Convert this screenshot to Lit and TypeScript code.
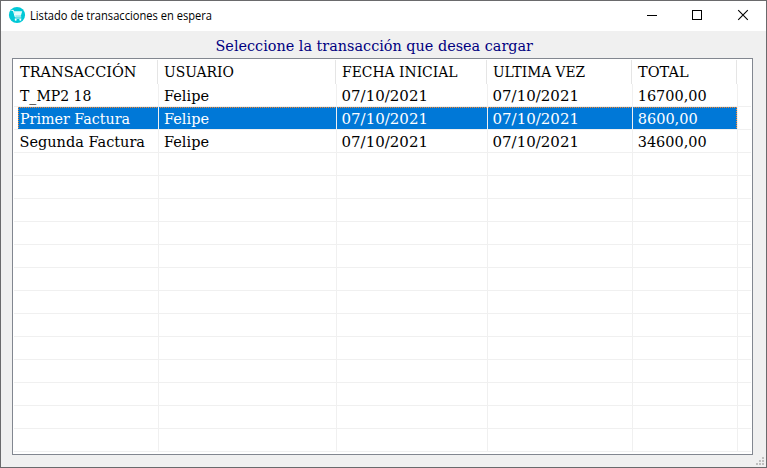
import { LitElement, html, css, svg } from "lit";
import { customElement, property } from "lit/decorators.js";

type Cell = [text: string, x: number, width: number];

const HEAD: Cell[] = [
  ["TRANSACCIÓN", 6, 116.5],
  ["USUARIO", 5, 70],
  ["FECHA INICIAL", 5, 115.5],
  ["ULTIMA VEZ", 5, 92],
  ["TOTAL", 5, 50.5],
];

const DATE: Cell = ["07/10/2021", 4.5, 86.5];
const USER: Cell = ["Felipe", 5, 45];

const ROWS: Cell[][] = [
  [["T_MP2 18", 6, 71.5], USER, DATE, DATE, ["16700,00", 4.7, 69]],
  [["Primer Factura", 6, 110], USER, DATE, DATE, ["8600,00", 4.7, 60]],
  [["Segunda Factura", 5.5, 125.5], USER, DATE, DATE, ["34600,00", 4.7, 69]],
];

const ROW_COUNT = 16;
const SELECTED = 1;

@customElement("fit-text")
class FitText extends LitElement {
  @property() text = "";
  @property({ type: Number }) x = 0;
  @property({ type: Number }) width = 0;
  @property({ type: Number }) baseline = 0;

  static styles = css`
    :host { display: block; height: 100%; }
    .line { display: block; width: 100%; height: 100%; overflow: visible; }
    .glyphs { fill: currentColor; white-space: pre; }
  `;

  render() {
    return html`<svg class="line">${svg`<text class="glyphs" x=${this.x} y=${this.baseline}
      textLength=${this.width} lengthAdjust="spacingAndGlyphs">${this.text}</text>`}</svg>`;
  }
}

@customElement("app-root")
class AppRoot extends LitElement {
  static styles = css`
    :host {
      display: block;
      height: 468px;
      font-family: "DejaVu Serif", serif;
      font-size: 15px;
      color: #000;
    }
    .window {
      box-sizing: border-box;
      height: 100%;
      border: 1px solid #6a6a6c;
      background: #f0f0f0;
      display: flex;
      flex-direction: column;
      position: relative;
    }
    .titlebar {
      height: 30px;
      background: #fff;
      display: flex;
      font-family: "Open Sans", "Noto Sans", sans-serif;
      font-size: 11.7px;
    }
    .logo { width: 18px; height: 18px; margin: 5px 0 0 7px; flex: none; }
    .caption { flex: 1; }
    .controls { display: flex; }
    .controls svg { width: 46px; height: 30px; }
    .heading { height: 27px; color: #000080; }
    .list {
      box-sizing: border-box;
      width: 741px;
      height: 397px;
      margin-left: 11px;
      padding: 1px;
      border: 1px solid #828790;
      background: #fff;
    }
    .row {
      box-sizing: border-box;
      display: grid;
      grid-template-columns: 145px 178px 151px 145px 105px 13px;
      height: 23px;
      border-bottom: 1px solid #f0f0f0;
    }
    .cell { box-sizing: border-box; border-right: 1px solid #f0f0f0; min-width: 0; }
    .head { height: 24px; border-bottom: 0; }
    .head .cell { border-right: 0; background: linear-gradient(#e5e5e5, #e5e5e5) right 1px top 0 / 1px 24px no-repeat; }
    .selected {
      color: #fff;
      background:
        repeating-linear-gradient(90deg, #ff8728 0 1px, #0078d7 1px 2px) 4px 0 / 719px 1px no-repeat,
        repeating-linear-gradient(#ff8728 0 1px, #0078d7 1px 2px) 4px 0 / 1px 22px no-repeat,
        repeating-linear-gradient(#ff8728 0 1px, #0078d7 1px 2px) 722px 0 / 1px 22px no-repeat,
        linear-gradient(#0078d7, #0078d7) 4px 0 / 719px 22px no-repeat;
    }
    .grip { position: absolute; right: 2px; bottom: 2px; width: 8px; height: 8px; fill: #bfbfbf; }
  `;

  private cells(items: Cell[], baseline: number) {
    return [0, 1, 2, 3, 4].map((i) => html`<div class="cell">${items[i]
      ? html`<fit-text .text=${items[i][0]} .x=${items[i][1]} .width=${items[i][2]} .baseline=${baseline}></fit-text>`
      : ""}</div>`);
  }

  render() {
    return html`
      <div class="window">
        <div class="titlebar">
          <svg class="logo" viewBox="0 0 18 18">
            <circle cx="9" cy="9" r="8.1" fill="#00c8d6"></circle>
            <path d="M3.4 4.4h2l1.8 6.5h6" fill="none" stroke="#fff" stroke-width="1"></path>
            <path d="M5.9 5.3h8.3l-1.3 4.5H7.1z" fill="#e4fbfc"></path>
            <path d="M6.8 12.4h6.6" stroke="#b5f0f4" stroke-width=".7"></path>
            <circle cx="7.7" cy="13.7" r="1" fill="#fff"></circle>
            <circle cx="12.3" cy="13.7" r="1" fill="#fff"></circle>
          </svg>
          <fit-text class="caption" .text=${"Listado de transacciones en espera"} .x=${4} .width=${182} .baseline=${19}></fit-text>
          <div class="controls">
            <svg viewBox="0 0 46 30"><path d="M19 14.5h10" stroke="#000"></path></svg>
            <svg viewBox="0 0 46 30"><rect x="18.5" y="9.5" width="9" height="9" fill="none" stroke="#000"></rect></svg>
            <svg viewBox="0 0 46 30"><path d="M18.2 9.2l9.6 9.6M27.8 9.2l-9.6 9.6" stroke="#000" stroke-width="1.1"></path></svg>
          </div>
        </div>
        <div class="heading">
          <fit-text .text=${"Seleccione la transacción que desea cargar"} .x=${214.5} .width=${317.5} .baseline=${20}></fit-text>
        </div>
        <div class="list">
          <div class="row head">${this.cells(HEAD, 17)}</div>
          ${Array.from({ length: ROW_COUNT }, (_, i) => html`
            <div class="row ${i === SELECTED ? "selected" : ""}">${this.cells(ROWS[i] ?? [], 17)}</div>`)}
        </div>
        <svg class="grip" viewBox="0 0 8 8">
          <path d="M6 0h2v2H6zM3 3h2v2H3zM6 3h2v2H6zM0 6h2v2H0zM3 6h2v2H3zM6 6h2v2H6z"></path>
        </svg>
      </div>`;
  }
}
